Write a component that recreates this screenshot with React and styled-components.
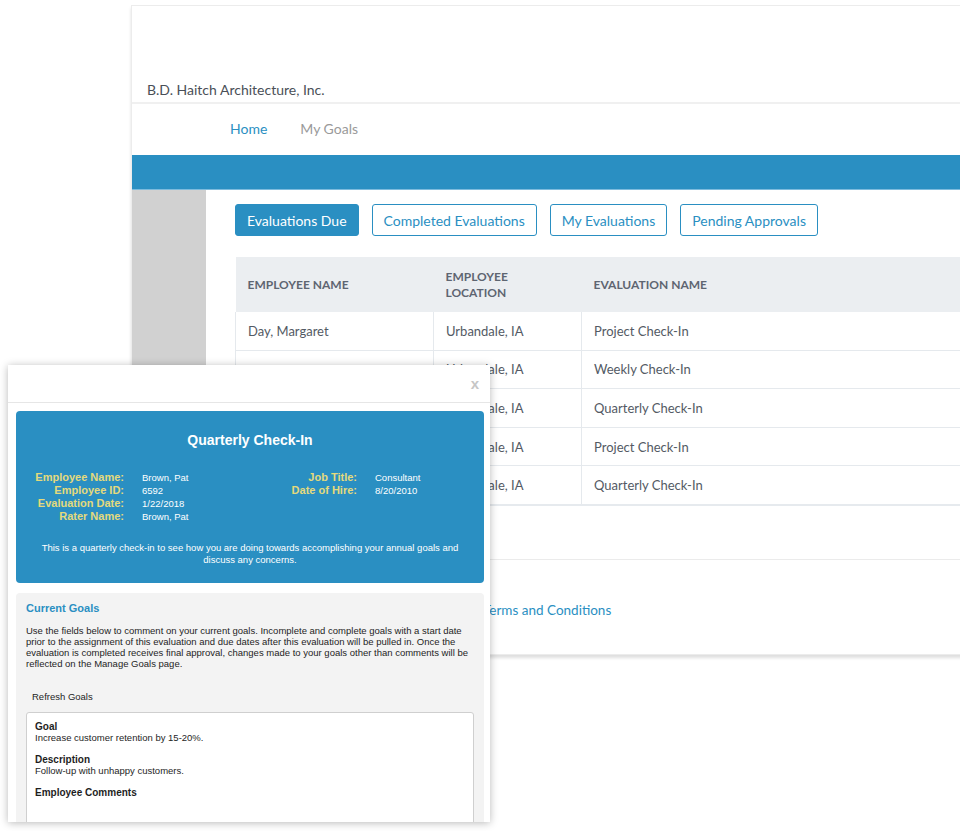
import React from 'react'
import styled, { createGlobalStyle } from 'styled-components'

const BLUE = '#2a8fc2'

const GlobalStyle = createGlobalStyle`
    html, body {
        margin: 0;
        padding: 0;
        background: #fff;
    }
    body {
        width: 960px;
        height: 831px;
        overflow: hidden;
    }
`

const Stage = styled.div`
    position: relative;
    width: 960px;
    height: 831px;
    overflow: hidden;
    background: #fff;
`

/* ---------- portal window ---------- */

const PortalWindow = styled.div`
    position: absolute;
    left: 131px;
    top: 5px;
    width: 860px;
    height: 648px;
    display: flex;
    flex-direction: column;
    background: #fff;
    border: 1px solid #ececec;
    box-shadow: 0 3px 3px rgba(0, 0, 0, .13);
    font-family: Lato, 'Open Sans', sans-serif;
`

const Header = styled.header`
    height: 98px;
    display: flex;
    align-items: flex-end;
    padding: 0 15px 2px;
    box-sizing: border-box;
    border-bottom: 2px solid #f0f0f0;
`

const CompanyName = styled.div`
    font-size: 14px;
    line-height: 20px;
    color: #4a4f57;
`

const Nav = styled.nav`
    height: 51px;
    display: flex;
    align-items: center;
    gap: 33px;
    padding: 0 0 2px 98px;
    box-sizing: border-box;
`

const NavLink = styled.a`
    font-size: 14px;
    color: ${p => (p.$active ? BLUE : '#9a9a9a')};
    text-decoration: none;
`

const BlueBar = styled.div`
    height: 34px;
    background: ${BLUE};
    border-bottom: 1px solid #7dbbdd;
`

const PortalBody = styled.div`
    flex: 1;
    display: flex;
    min-height: 0;
`

const Sidebar = styled.aside`
    width: 74px;
    background: #d1d1d1;
`

const Main = styled.main`
    flex: 1;
    display: flex;
    flex-direction: column;
`

const Content = styled.div`
    padding: 14px 0 0 29px;
`

const TabRow = styled.div`
    display: flex;
    gap: 13px;
`

const Tab = styled.button`
    height: 32px;
    padding: 0 11px;
    border: 1px solid ${BLUE};
    border-radius: 3px;
    background: ${p => (p.$active ? BLUE : '#fff')};
    color: ${p => (p.$active ? '#fff' : BLUE)};
    font-family: inherit;
    font-size: 14px;
`

const Table = styled.table`
    width: 100%;
    margin-top: 21px;
    border-collapse: collapse;
    border-bottom: 2px solid #e6eaee;
`

const HeadCell = styled.th`
    width: ${p => p.$width || 'auto'};
    height: 55px;
    padding: 0 12px;
    box-sizing: border-box;
    background: #ebeef1;
    text-align: left;
    font-size: 12px;
    font-weight: 700;
    line-height: 16px;
    color: #5e6571;
    text-transform: uppercase;
`

const Cell = styled.td`
    height: 37.6px;
    padding: 0 12px;
    font-size: 13px;
    color: #535a64;
    border: 1px solid #e5e9ed;
    border-top: none;
`

const TableGap = styled.div`
    height: 53px;
`

const Footer = styled.footer`
    flex: 1;
    display: flex;
    align-items: center;
    padding: 7px 0 0 277px;
    border-top: 1px solid #ebebeb;
`

const FooterLink = styled.a`
    font-size: 13.5px;
    color: ${BLUE};
    text-decoration: none;
`

/* ---------- evaluation modal ---------- */

const Modal = styled.div`
    position: absolute;
    left: 8px;
    top: 365px;
    width: 482px;
    height: 457px;
    display: flex;
    flex-direction: column;
    background: #fff;
    box-shadow: 0 1px 8px rgba(0, 0, 0, .28);
    overflow: hidden;
    font-family: 'Liberation Sans', Arial, sans-serif;
    color: #1e1e1e;
`

const ModalHeader = styled.div`
    height: 38px;
    flex: none;
    display: flex;
    align-items: center;
    justify-content: flex-end;
    padding-right: 11px;
    box-sizing: border-box;
    border-bottom: 1px solid #e6e6e6;
`

const CloseButton = styled.span`
    font-size: 15px;
    font-weight: 700;
    color: #c6c6c6;
`

const ModalBody = styled.div`
    flex: 1;
    display: flex;
    flex-direction: column;
    gap: 10px;
    padding: 8px 6px 0 8px;
    min-height: 0;
`

const SummaryCard = styled.section`
    padding: 21px 20px 17px;
    background: ${BLUE};
    border-radius: 4px;
    color: #fff;
`

const SummaryTitle = styled.h2`
    margin: 0;
    font-size: 14px;
    line-height: 16px;
    text-align: center;
`

const DetailColumns = styled.div`
    display: grid;
    grid-template-columns: 215px 1fr;
    column-gap: 18px;
    margin-top: 23px;
`

const DetailList = styled.dl`
    display: grid;
    grid-template-columns: 88px 1fr;
    column-gap: 18px;
    align-content: start;
    margin: 0;
    line-height: 13px;
`

const DetailLabel = styled.dt`
    justify-self: end;
    white-space: nowrap;
    font-size: 11px;
    font-weight: 700;
    color: #e4da7c;
`

const DetailValue = styled.dd`
    margin: 0;
    font-size: 9.5px;
`

const SummaryNote = styled.p`
    margin: 19px 0 0;
    font-size: 9.5px;
    line-height: 12px;
    text-align: center;
`

const GoalsSection = styled.section`
    flex: 1;
    padding: 8px 10px 0;
    background: #f3f3f3;
    border-radius: 4px 4px 0 0;
`

const SectionTitle = styled.h3`
    margin: 0 0 10px;
    font-size: 11px;
    line-height: 14px;
    color: ${BLUE};
`

const Intro = styled.p`
    margin: 0;
    font-size: 9.5px;
    line-height: 11px;
`

const RefreshButton = styled.div`
    margin-top: 21px;
    padding: 0 6px;
    font-size: 9.5px;
    line-height: 14px;
`

const GoalCard = styled.div`
    margin-top: 8px;
    height: 140px;
    padding: 8px;
    background: #fff;
    border: 1px solid #cfcfcf;
    border-radius: 3px;
`

const GoalField = styled.div`
    font-size: 9.5px;
    line-height: 11px;

    & + & {
        margin-top: 11px;
    }
`

const FieldName = styled.div`
    font-size: 10px;
    font-weight: 700;
`

const evaluations = [
    { name: 'Day, Margaret', location: 'Urbandale, IA', evaluation: 'Project Check-In' },
    { name: '', location: 'Urbandale, IA', evaluation: 'Weekly Check-In' },
    { name: '', location: 'Urbandale, IA', evaluation: 'Quarterly Check-In' },
    { name: '', location: 'Urbandale, IA', evaluation: 'Project Check-In' },
    { name: '', location: 'Urbandale, IA', evaluation: 'Quarterly Check-In' },
]

const tabs = ['Evaluations Due', 'Completed Evaluations', 'My Evaluations', 'Pending Approvals']

const employeeDetails = [
    ['Employee Name:', 'Brown, Pat'],
    ['Employee ID:', '6592'],
    ['Evaluation Date:', '1/22/2018'],
    ['Rater Name:', 'Brown, Pat'],
]

const jobDetails = [
    ['Job Title:', 'Consultant'],
    ['Date of Hire:', '8/20/2010'],
]

const Details = ({ items }) => (
    <DetailList>
        {items.map(([label, value]) => (
            <React.Fragment key={label}>
                <DetailLabel>{label}</DetailLabel>
                <DetailValue>{value}</DetailValue>
            </React.Fragment>
        ))}
    </DetailList>
)

const Portal = () => (
    <PortalWindow>
        <Header>
            <CompanyName>B.D. Haitch Architecture, Inc.</CompanyName>
        </Header>
        <Nav>
            <NavLink $active>Home</NavLink>
            <NavLink>My Goals</NavLink>
        </Nav>
        <BlueBar />
        <PortalBody>
            <Sidebar />
            <Main>
                <Content>
                    <TabRow>
                        {tabs.map((t, i) => (
                            <Tab key={t} $active={i === 0}>{t}</Tab>
                        ))}
                    </TabRow>
                    <Table>
                        <thead>
                            <tr>
                                <HeadCell $width="198px">Employee Name</HeadCell>
                                <HeadCell $width="148px">Employee Location</HeadCell>
                                <HeadCell>Evaluation Name</HeadCell>
                            </tr>
                        </thead>
                        <tbody>
                            {evaluations.map((row, i) => (
                                <tr key={i}>
                                    <Cell>{row.name}</Cell>
                                    <Cell>{row.location}</Cell>
                                    <Cell>{row.evaluation}</Cell>
                                </tr>
                            ))}
                        </tbody>
                    </Table>
                    <TableGap />
                </Content>
                <Footer>
                    <FooterLink>Terms and Conditions</FooterLink>
                </Footer>
            </Main>
        </PortalBody>
    </PortalWindow>
)

const EvaluationModal = () => (
    <Modal>
        <ModalHeader>
            <CloseButton>x</CloseButton>
        </ModalHeader>
        <ModalBody>
            <SummaryCard>
                <SummaryTitle>Quarterly Check-In</SummaryTitle>
                <DetailColumns>
                    <Details items={employeeDetails} />
                    <Details items={jobDetails} />
                </DetailColumns>
                <SummaryNote>
                    This is a quarterly check-in to see how you are doing towards accomplishing your annual goals and discuss any concerns.
                </SummaryNote>
            </SummaryCard>
            <GoalsSection>
                <SectionTitle>Current Goals</SectionTitle>
                <Intro>
                    Use the fields below to comment on your current goals. Incomplete and complete goals with a start date prior to the assignment of this evaluation and due dates after this evaluation will be pulled in. Once the evaluation is completed receives final approval, changes made to your goals other than comments will be reflected on the Manage Goals page.
                </Intro>
                <RefreshButton>Refresh Goals</RefreshButton>
                <GoalCard>
                    <GoalField>
                        <FieldName>Goal</FieldName>
                        Increase customer retention by 15-20%.
                    </GoalField>
                    <GoalField>
                        <FieldName>Description</FieldName>
                        Follow-up with unhappy customers.
                    </GoalField>
                    <GoalField>
                        <FieldName>Employee Comments</FieldName>
                    </GoalField>
                </GoalCard>
            </GoalsSection>
        </ModalBody>
    </Modal>
)

export default function App() {
    return (
        <Stage>
            <GlobalStyle />
            <Portal />
            <EvaluationModal />
        </Stage>
    )
}
